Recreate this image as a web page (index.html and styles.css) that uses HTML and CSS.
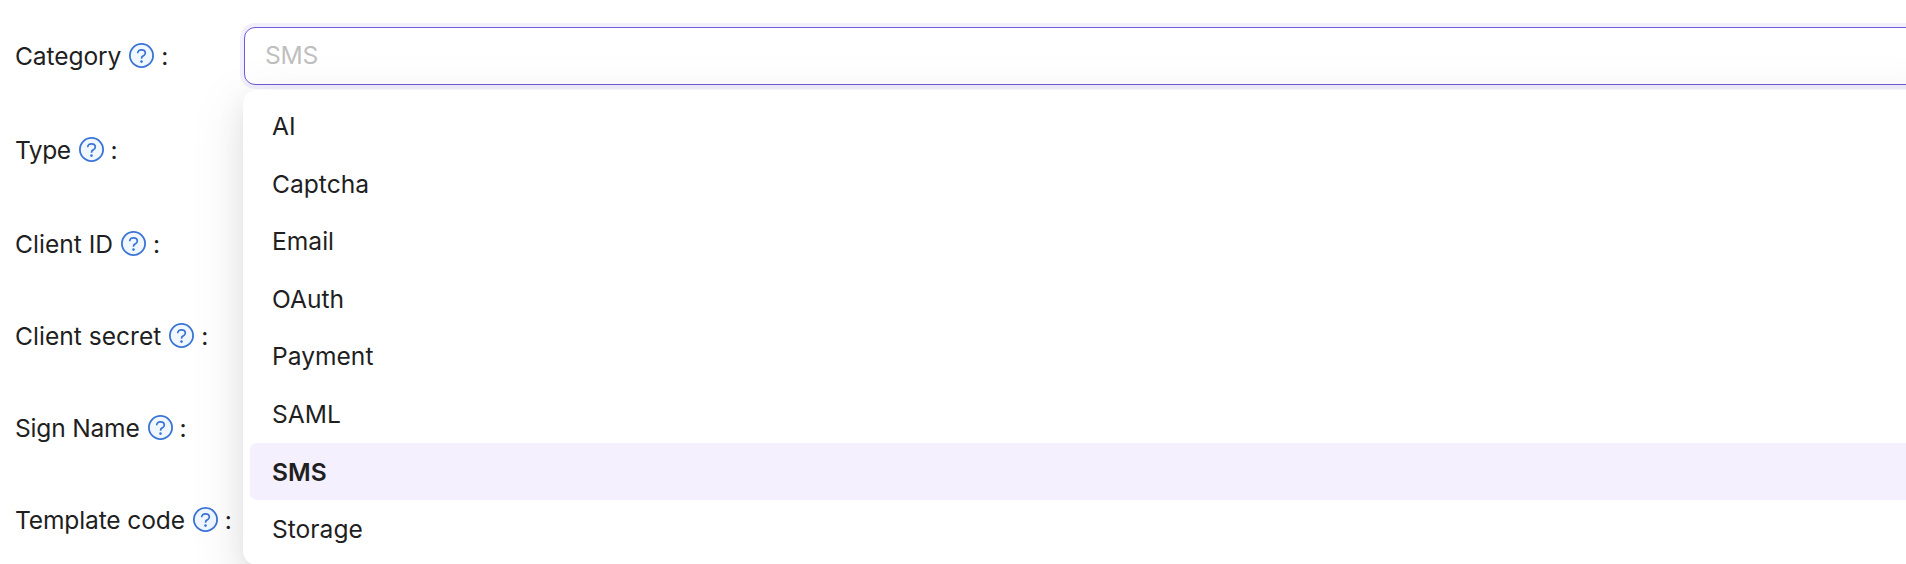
FILE: index.html
```
<!DOCTYPE html>
<html lang="en">
<head>
<meta charset="utf-8">
<title>Provider</title>
<link rel="stylesheet" href="styles.css">
</head>
<body>
<svg width="0" height="0" class="defs">
  <symbol id="help" viewBox="0 0 25 25">
    <circle cx="12.5" cy="12.5" r="11.6" fill="#f0f7ff" stroke="#3a74d6" stroke-width="1.8"/>
    <path d="M8.7 10.2C8.7 7.9 10.3 6.8 12.5 6.8S16.3 8 16.3 10C16.3 11.6 15.3 12.4 14.2 12.9C13 13.4 12.5 14 12.5 15.7" fill="none" stroke="#3a74d6" stroke-width="1.7"/>
    <circle cx="12.5" cy="18.6" r="1.3" fill="#3a74d6"/>
  </symbol>
</svg>
<main class="form">
  <div class="row row-category">
    <label class="label"><span class="text">Category</span><svg class="help"><use href="#help"/></svg><span>:</span></label>
    <div class="select">
      <div class="placeholder">SMS</div>
      <ul class="dropdown">
        <li class="option">AI</li>
        <li class="option">Captcha</li>
        <li class="option">Email</li>
        <li class="option">OAuth</li>
        <li class="option">Payment</li>
        <li class="option">SAML</li>
        <li class="option selected">SMS</li>
        <li class="option">Storage</li>
      </ul>
    </div>
  </div>
  <div class="row row-type"><label class="label"><span class="text">Type</span><svg class="help"><use href="#help"/></svg><span>:</span></label></div>
  <div class="row row-id"><label class="label"><span class="text">Client ID</span><svg class="help"><use href="#help"/></svg><span>:</span></label></div>
  <div class="row row-secret"><label class="label"><span class="text">Client secret</span><svg class="help"><use href="#help"/></svg><span>:</span></label></div>
  <div class="row row-sign"><label class="label"><span class="text">Sign Name</span><svg class="help"><use href="#help"/></svg><span>:</span></label></div>
  <div class="row row-template"><label class="label"><span class="text">Template code</span><svg class="help"><use href="#help"/></svg><span>:</span></label></div>
</main>
</body>
</html>
```
FILE: styles.css
```
* { box-sizing: border-box; }
body {
  margin: 0;
  height: 564px;
  overflow: hidden;
  background: #fff;
  color: #1f1f1f;
  font: 24.6px/36px Inter, "Liberation Sans", sans-serif;
}
.defs { position: absolute; }
.form {
  display: flex;
  flex-direction: column;
  gap: 34px;
  padding: 27px 0 0 15px;
}
.row { display: flex; height: 58px; }
.row-category, .row-type { margin-bottom: 2px; }
.label {
  display: flex;
  flex: none;
  align-items: center;
  width: 229px;
  white-space: nowrap;
}
.row-category .text { letter-spacing: -0.12px; }
.row-type .text { letter-spacing: -0.5px; }
.row-sign .text { letter-spacing: -0.22px; }
.row-template .text { letter-spacing: -0.16px; }
.help { width: 25px; height: 25px; margin: 0 7px 1px 8px; flex: none; }
.select {
  position: relative;
  flex: none;
  width: 1700px;
  padding: 9px 20px;
  border: 1px solid #7459d9;
  border-radius: 11px;
  background: #fff;
  box-shadow: 0 0 0 4px #f3f0fd;
}
.placeholder { color: #bfbfbf; letter-spacing: -0.3px; }
.dropdown {
  position: absolute;
  top: 62px;
  left: -2px;
  width: 1702px;
  margin: 0;
  padding: 7px;
  list-style: none;
  background: #fff;
  border-radius: 14px;
  box-shadow: 0 11px 29px rgba(0, 0, 0, 0.08), 0 5px 11px -7px rgba(0, 0, 0, 0.12), 0 16px 50px 14px rgba(0, 0, 0, 0.05);
}
.option { height: 57.6px; padding: 11px 22px; border-radius: 7px; }
.selected { background: #f4f0fe; font-weight: 600; }
```
